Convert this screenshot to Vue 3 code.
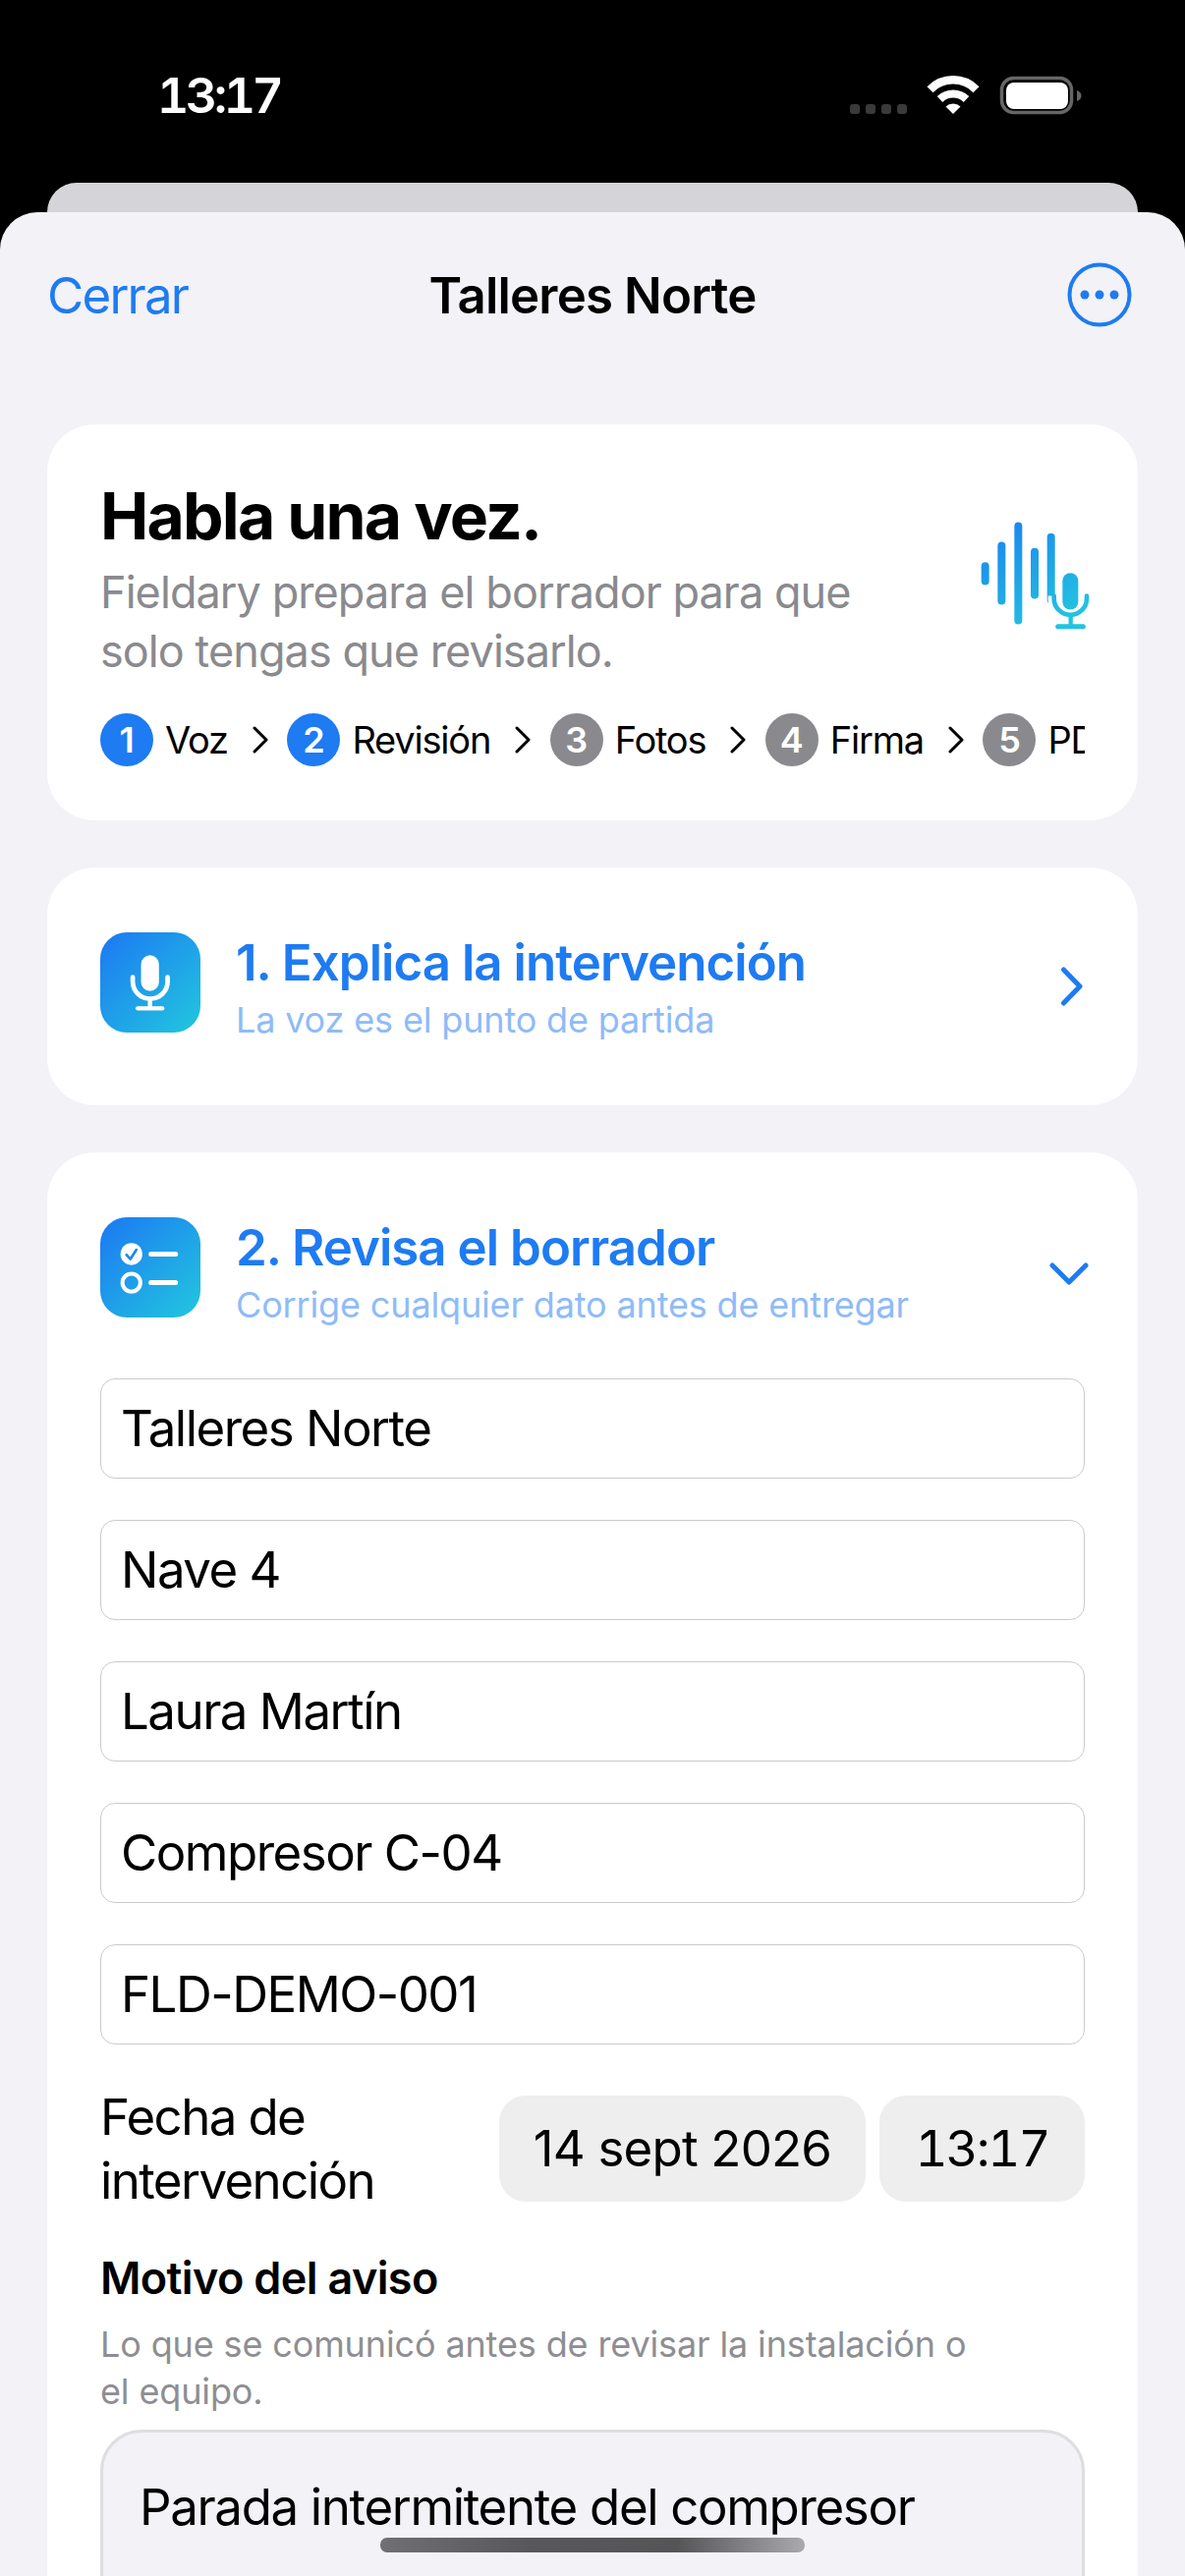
<template>
  <div class="screen">
    <div class="status">
      <span class="clock">13:17</span>
      <svg class="status-icons" width="240" height="40" viewBox="862 77 240 40">
        <rect v-for="x in [865, 881, 897, 913]" :key="x" :x="x" y="106" width="10" height="10" rx="3" fill="#3a3a3c" />
        <path d="M946.5 91.2A33 33 0 0 1 993.5 91.2" fill="none" stroke="#fff" stroke-width="8.5" />
        <path d="M956.5 101A19.5 19.5 0 0 1 983.5 101" fill="none" stroke="#fff" stroke-width="8" />
        <path d="M962.5 108.5A11 11 0 0 1 977.5 108.5L970 116Z" fill="#fff" />
        <rect x="1019.5" y="79.5" width="71" height="35" rx="12" fill="none" stroke="#666" stroke-width="3.5" />
        <rect x="1024" y="84" width="63" height="27" rx="8" fill="#fff" />
        <path d="M1096 92C1099 93 1100.5 95 1100.5 97.5C1100.5 100 1099 102 1096 103Z" fill="#666" />
      </svg>
    </div>
    <div class="back-sheet"></div>
    <div class="sheet">
      <div class="nav">
        <span class="nav-close">Cerrar</span>
        <span class="nav-title">Talleres Norte</span>
        <svg class="nav-more" width="66" height="66" viewBox="0 0 66 66">
          <circle cx="33" cy="33" r="30.5" fill="none" stroke="#1e7bf2" stroke-width="4" />
          <circle cx="18" cy="33" r="4.5" fill="#1e7bf2" />
          <circle cx="33" cy="33" r="4.5" fill="#1e7bf2" />
          <circle cx="48" cy="33" r="4.5" fill="#1e7bf2" />
        </svg>
      </div>

      <div class="card hero">
        <div class="hero-top">
          <div class="hero-text">
            <h1>Habla una vez.</h1>
            <p>Fieldary prepara el borrador para que solo tengas que revisarlo.</p>
          </div>
          <svg class="hero-icon" width="120" height="117" viewBox="100 80 360 350">
            <defs>
              <linearGradient id="wave" gradientUnits="userSpaceOnUse" x1="120" y1="90" x2="300" y2="420">
                <stop offset="0" stop-color="#1c7ff0" />
                <stop offset="1" stop-color="#22c2e0" />
              </linearGradient>
            </defs>
            <g stroke="url(#wave)" stroke-width="24" stroke-linecap="round" fill="none">
              <path d="M129 227V273M179 165V333M230 105V393M280 184V315M330 139V330" />
            </g>
            <path d="M339 318V328A50 50 0 0 0 439 328V318" fill="none" stroke="#fff" stroke-width="36" />
            <g fill="none" stroke="url(#wave)" stroke-linecap="round">
              <path d="M389 272V336" stroke-width="48" />
              <path d="M339 318V326A50 50 0 0 0 439 326V318" stroke-width="14" />
              <path d="M390 380V410" stroke-width="13" stroke-linecap="butt" />
              <path d="M351 412H428" stroke-width="15" />
            </g>
          </svg>
        </div>
        <div class="steps">
          <template v-for="(step, i) in steps" :key="step.label">
            <span class="step-num" :class="{ done: step.active }">{{ i + 1 }}</span>
            <span class="step-label">{{ step.label }}</span>
            <svg v-if="i < steps.length - 1" class="step-chevron" width="16" height="28" viewBox="0 0 16 28">
              <path d="M2 2L14 14L2 26" fill="none" stroke="#000" stroke-width="3" stroke-linecap="round" stroke-linejoin="round" />
            </svg>
          </template>
        </div>
      </div>

      <div class="card section">
        <div class="section-head">
          <div class="tile">
            <svg width="102" height="102" viewBox="68 57 302 302">
              <g fill="none" stroke="#fff" stroke-linecap="round">
                <path d="M218 153V207" stroke-width="54" />
                <path d="M166 192V205A52 52 0 0 0 271 205V192" stroke-width="14" />
                <path d="M218 262V285" stroke-width="13" stroke-linecap="butt" />
                <path d="M181 286H255" stroke-width="13" />
              </g>
            </svg>
          </div>
          <div class="section-text">
            <div class="section-title">1. Explica la intervención</div>
            <div class="section-sub">La voz es el punto de partida</div>
          </div>
          <svg class="chevron-right" width="24" height="40" viewBox="0 0 24 40">
            <path d="M3.500 3L20 20L3.500 37" fill="none" stroke="#1e7bf2" stroke-width="5" stroke-linecap="round" stroke-linejoin="round" />
          </svg>
        </div>
      </div>

      <div class="card section open">
        <div class="section-head tall">
          <div class="tile">
            <svg width="102" height="102" viewBox="68 57 302 302">
              <circle cx="162" cy="168" r="33" fill="#fff" />
              <path d="M147 170L159 183L177 155" fill="none" stroke="#1a8cee" stroke-width="8" stroke-linecap="round" stroke-linejoin="round" />
              <circle cx="162" cy="254" r="27" fill="none" stroke="#fff" stroke-width="12" />
              <path d="M221 168H295M221 254H295" fill="none" stroke="#fff" stroke-width="15" stroke-linecap="round" />
            </svg>
          </div>
          <div class="section-text">
            <div class="section-title">2. Revisa el borrador</div>
            <div class="section-sub">Corrige cualquier dato antes de entregar</div>
          </div>
          <svg class="chevron-down" width="40" height="24" viewBox="0 0 40 24">
            <path d="M3 3L20 20L37 3" fill="none" stroke="#1e7bf2" stroke-width="5" stroke-linecap="round" stroke-linejoin="round" />
          </svg>
        </div>

        <div class="fields">
          <div v-for="field in fields" :key="field" class="field">{{ field }}</div>
        </div>

        <div class="date-row">
          <div class="date-label">Fecha de intervención</div>
          <div class="pill date">14 sept 2026</div>
          <div class="pill time">13:17</div>
        </div>

        <div class="note-title">Motivo del aviso</div>
        <div class="note-help">Lo que se comunicó antes de revisar la instalación o el equipo.</div>
        <div class="note-box">Parada intermitente del compresor</div>
      </div>
    </div>
    <div class="home-bar"></div>
  </div>
</template>

<script setup>
const steps = [
  { label: 'Voz', active: true },
  { label: 'Revisión', active: true },
  { label: 'Fotos', active: false },
  { label: 'Firma', active: false },
  { label: 'PDF', active: false }
]

const fields = ['Talleres Norte', 'Nave 4', 'Laura Martín', 'Compresor C-04', 'FLD-DEMO-001']
</script>

<style>
html, body {
  margin: 0;
  background: #000;
}
</style>

<style scoped>
.screen {
  position: relative;
  width: 1206px;
  height: 2622px;
  overflow: hidden;
  background: #000;
  font-family: Inter, "Liberation Sans", sans-serif;
  color: #000;
}
.status {
  height: 186px;
  display: flex;
  align-items: flex-start;
  justify-content: space-between;
  box-sizing: border-box;
  padding: 77px 104px 0 160px;
}
.clock {
  font-size: 50px;
  line-height: 40px;
  font-weight: 600;
  letter-spacing: -3.500px;
  font-variant-numeric: tabular-nums;
  color: #fff;
}
.back-sheet {
  height: 30px;
  margin: 0 48px;
  background: #d4d4d9;
  border-radius: 30px 30px 0 0;
}
.sheet {
  height: 2406px;
  box-sizing: border-box;
  background: #f2f2f7;
  border-radius: 38px 38px 0 0;
  padding: 0 48px;
}
.nav {
  height: 168px;
  margin-bottom: 48px;
  display: grid;
  grid-template-columns: 1fr auto 1fr;
  align-items: center;
  font-size: 51px;
}
.nav-close {
  color: #1e7bf2;
  letter-spacing: -1.800px;
}
.nav-title {
  font-weight: 600;
  letter-spacing: -0.850px;
}
.nav-more {
  justify-self: end;
  margin-right: 6px;
}
.card {
  background: #fff;
  border-radius: 48px;
  margin-bottom: 48px;
  box-sizing: border-box;
}
.hero {
  height: 403px;
  padding: 54px 54px 0;
}
.hero-top {
  display: flex;
  justify-content: space-between;
}
.hero-text {
  width: 820px;
}
.hero h1 {
  margin: 0 0 9px;
  font-size: 66px;
  line-height: 78px;
  font-weight: 700;
  letter-spacing: -1.800px;
}
.hero p {
  margin: 0;
  font-size: 45px;
  line-height: 60px;
  color: #8a8a8e;
  letter-spacing: -0.930px;
}
.hero-icon {
  margin: 41px -9px 0 0;
}
.steps {
  display: flex;
  align-items: center;
  margin-top: 33px;
  height: 54px;
  overflow: hidden;
}
.step-num {
  flex: none;
  width: 54px;
  height: 54px;
  border-radius: 50%;
  background: #8a8a8e;
  color: #fff;
  font-size: 36px;
  font-weight: 600;
  line-height: 54px;
  text-align: center;
}
.step-num.done {
  background: #1e7bf2;
}
.step-label {
  flex: none;
  margin-left: 12px;
  font-size: 38px;
  letter-spacing: -1.200px;
}
.step-chevron {
  flex: none;
  margin: 0 19.500px 0 25px;
}
.section {
  padding: 66px 54px 66px;
}
.section-head {
  display: flex;
  align-items: flex-start;
  height: 110px;
}
.section-head.tall {
  height: 116px;
}
.tile {
  flex: none;
  width: 102px;
  height: 102px;
  border-radius: 27px;
  background: linear-gradient(135deg, #1c78f2, #22c7df);
}
.tile svg {
  display: block;
}
.section-text {
  flex: 1;
  margin-left: 36px;
  padding-top: 1px;
}
.section-title {
  font-size: 51px;
  line-height: 60px;
  font-weight: 600;
  color: #1e7bf2;
  letter-spacing: -0.950px;
}
.section-sub {
  margin-top: 4px;
  font-size: 36px;
  line-height: 48px;
  color: #8fbbf8;
  letter-spacing: -0.150px;
}
.chevron-right {
  align-self: center;
  margin-right: 1px;
}
.chevron-down {
  align-self: center;
  margin-right: -4px;
}
.fields {
  display: flex;
  flex-direction: column;
  gap: 42px;
  margin-top: 48px;
}
.field {
  height: 102px;
  box-sizing: border-box;
  border: 1px solid #cbcbce;
  border-radius: 15px;
  padding: 0 20px;
  font-size: 51px;
  line-height: 100px;
  letter-spacing: -1.500px;
}
.date-row {
  display: flex;
  align-items: center;
  margin-top: 41px;
}
.date-label {
  width: 406px;
  flex: none;
  font-size: 51px;
  line-height: 65px;
  letter-spacing: -1.600px;
}
.pill {
  flex: none;
  height: 108px;
  border-radius: 27px;
  background: #eeeeef;
  text-align: center;
  font-size: 51px;
  line-height: 108px;
  letter-spacing: -0.800px;
}
.date {
  width: 373px;
}
.time {
  width: 209px;
  margin-left: 14px;
  font-variant-numeric: tabular-nums;
  letter-spacing: -2px;
}
.note-title {
  margin-top: 40px;
  font-size: 45px;
  line-height: 54px;
  font-weight: 600;
  letter-spacing: -0.650px;
}
.note-help {
  margin-top: 16px;
  width: 900px;
  font-size: 36px;
  line-height: 48px;
  color: #8e8e92;
  letter-spacing: -0.130px;
}
.note-box {
  margin-top: 15px;
  height: 300px;
  box-sizing: border-box;
  border: 3px solid #dedee2;
  border-radius: 42px;
  background: #f2f2f7;
  padding: 44px 37px;
  font-size: 51px;
  line-height: 63px;
  letter-spacing: -1.350px;
}
.home-bar {
  position: absolute;
  left: 387px;
  top: 2583px;
  width: 432px;
  height: 15px;
  border-radius: 7px;
  background: linear-gradient(90deg, #707074, #58585c 35%, #555558 70%, #aaaaae);
}
</style>
